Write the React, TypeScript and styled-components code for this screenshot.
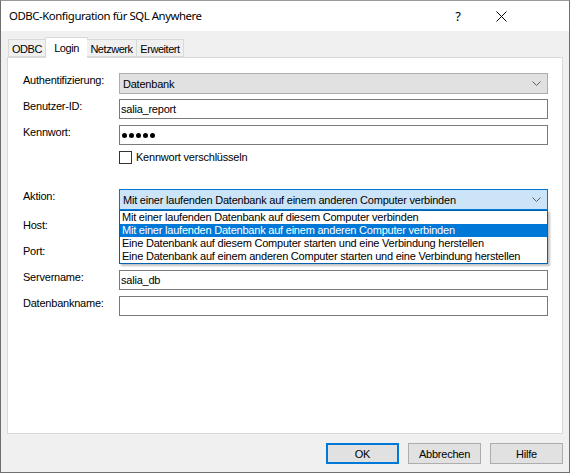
import React from 'react';
import styled, { createGlobalStyle } from 'styled-components';

const GlobalStyle = createGlobalStyle`
  html, body {
    margin: 0;
    padding: 0;
    background: #ffffff;
  }
  * {
    box-sizing: border-box;
  }
`;

const UI_FONT = `"Liberation Sans", Arial, sans-serif`;

// Outer dialog frame with the thin dark window border.
const Window = styled.div`
  width: 570px;
  height: 473px;
  display: flex;
  flex-direction: column;
  border: 1px solid #6f6f6f;
  border-top-color: #9a9a9a;
  background: #f0f0f0;
  font-family: ${UI_FONT};
  font-size: 11px;
  letter-spacing: -0.22px;
  color: #000;
`;

const TitleBar = styled.div`
  height: 30px;
  flex: none;
  display: flex;
  align-items: center;
  background: #ffffff;
  padding-left: 8px;
`;

const Title = styled.div`
  flex: 1;
  font-family: "Noto Sans", "Segoe UI", sans-serif;
  font-size: 11.4px;
  letter-spacing: -0.45px;
  padding-bottom: 1px;
`;

const TitleButton = styled.div<{ $w: number }>`
  width: ${(p) => p.$w}px;
  height: 30px;
  display: flex;
  align-items: center;
  justify-content: center;
  font-family: "Noto Sans", sans-serif;
  font-size: 13px;
`;

const Body = styled.div`
  flex: 1;
  display: flex;
  flex-direction: column;
  padding: 7px 6px 8px 6px;
`;

const TabStrip = styled.div`
  display: flex;
  align-items: flex-end;
  height: 19px;
  padding-left: 1px;
  position: relative;
  z-index: 1;
`;

const Tab = styled.div<{ $active?: boolean; $w: number }>`
  width: ${(p) => p.$w}px;
  height: ${(p) => (p.$active ? 21 : 18)}px;
  margin-bottom: ${(p) => (p.$active ? -1 : 0)}px;
  margin-left: ${(p) => (p.$active ? -1 : 0)}px;
  margin-right: ${(p) => (p.$active ? -1 : 0)}px;
  display: flex;
  align-items: center;
  justify-content: center;
  padding-top: ${(p) => (p.$active ? 0 : 2)}px;
  background: ${(p) => (p.$active ? '#ffffff' : '#f0f0f0')};
  border: 1px solid #d9d9d9;
  border-bottom: ${(p) => (p.$active ? 'none' : '1px solid #d9d9d9')};
  border-left: ${(p) => (p.$active ? '1px solid #d9d9d9' : 'none')};
  white-space: nowrap;
  letter-spacing: -0.45px;
  &:first-child {
    border-left: 1px solid #d9d9d9;
  }
`;

const Panel = styled.div`
  height: 377px;
  background: #ffffff;
  border: 1px solid #d9d9d9;
  padding: 15px 14px 0 15px;
  display: flex;
  flex-direction: column;
`;

const Row = styled.div<{ $mt?: number }>`
  display: flex;
  align-items: flex-start;
  margin-top: ${(p) => p.$mt ?? 6}px;
`;

const Label = styled.div`
  width: 96px;
  flex: none;
  line-height: 13px;
  padding-top: 1px;
`;

const Control = styled.div`
  flex: 1;
  position: relative;
`;

const TextBox = styled.div`
  height: 20px;
  border: 1px solid #7a7a7a;
  background: #ffffff;
  display: flex;
  align-items: center;
  padding-left: 1px;
  white-space: nowrap;
`;

// Masked password characters, drawn as small round bullets.
const Dots = styled.span`
  display: flex;
  gap: 2px;
  padding-left: 1px;
`;

const Dot = styled.span`
  width: 5px;
  height: 5px;
  border-radius: 50%;
  background: #000;
`;

const Combo = styled.div<{ $focused?: boolean }>`
  height: 21px;
  border: 1px solid ${(p) => (p.$focused ? '#0078d7' : '#adadad')};
  background: ${(p) => (p.$focused ? '#cce4f7' : '#e1e1e1')};
  display: flex;
  align-items: center;
  padding-left: 3px;
  padding-right: 6px;
  white-space: nowrap;
`;

const ComboText = styled.span`
  flex: 1;
`;

const DropList = styled.div`
  position: absolute;
  top: 21px;
  left: 0;
  right: 0;
  height: 54px;
  background: #ffffff;
  border: 1px solid #0063b1;
  box-shadow: 2px 2px 2px rgba(0, 0, 0, 0.25);
  z-index: 2;
`;

const DropItem = styled.div<{ $selected?: boolean }>`
  height: 13px;
  line-height: 13px;
  padding-left: 2px;
  white-space: nowrap;
  background: ${(p) => (p.$selected ? '#0078d7' : 'transparent')};
  color: ${(p) => (p.$selected ? '#ffffff' : '#000000')};
`;

const CheckRow = styled.label`
  display: flex;
  align-items: center;
  gap: 4px;
  line-height: 13px;
`;

const CheckBox = styled.span`
  width: 13px;
  height: 13px;
  border: 1px solid #333333;
  background: #ffffff;
  flex: none;
`;

const ButtonBar = styled.div`
  display: flex;
  justify-content: flex-end;
  gap: 9px;
  padding-top: 9px;
`;

const Button = styled.div<{ $default?: boolean }>`
  width: 73px;
  height: 21px;
  display: flex;
  align-items: center;
  justify-content: center;
  background: #e1e1e1;
  border: ${(p) => (p.$default ? '2px solid #0078d7' : '1px solid #adadad')};
`;

const Chevron = () => (
  <svg width="9" height="5" viewBox="0 0 9 5">
    <path d="M0.5 0.5 L4.5 4.5 L8.5 0.5" fill="none" stroke="#606060" strokeWidth="1" />
  </svg>
);

const CloseIcon = () => (
  <svg width="11" height="11" viewBox="0 0 11 11">
    <path d="M0.5 0.5 L10.5 10.5 M10.5 0.5 L0.5 10.5" stroke="#000" strokeWidth="1" />
  </svg>
);

const actions = [
  'Mit einer laufenden Datenbank auf diesem Computer verbinden',
  'Mit einer laufenden Datenbank auf einem anderen Computer verbinden',
  'Eine Datenbank auf diesem Computer starten und eine Verbindung herstellen',
  'Eine Datenbank auf einem anderen Computer starten und eine Verbindung herstellen',
];

const tabs = [
  { name: 'ODBC', w: 38 },
  { name: 'Login', w: 43 },
  { name: 'Netzwerk', w: 50 },
  { name: 'Erweitert', w: 47 },
];

export default function App() {
  return (
    <>
      <GlobalStyle />
      <Window>
        <TitleBar>
          <Title>ODBC-Konfiguration für SQL Anywhere</Title>
          <TitleButton $w={40}>?</TitleButton>
          <TitleButton $w={46}>
            <CloseIcon />
          </TitleButton>
          <div style={{ width: 45 }} />
        </TitleBar>
        <Body>
          <TabStrip>
            {tabs.map((t) => (
              <Tab key={t.name} $w={t.w} $active={t.name === 'Login'}>
                {t.name}
              </Tab>
            ))}
          </TabStrip>
          <Panel>
            <Row $mt={0}>
              <Label>Authentifizierung:</Label>
              <Control>
                <Combo>
                  <ComboText>Datenbank</ComboText>
                  <Chevron />
                </Combo>
              </Control>
            </Row>
            <Row $mt={5}>
              <Label>Benutzer-ID:</Label>
              <Control>
                <TextBox>salia_report</TextBox>
              </Control>
            </Row>
            <Row>
              <Label>Kennwort:</Label>
              <Control>
                <TextBox>
                  <Dots>
                    {[0, 1, 2, 3, 4].map((i) => (
                      <Dot key={i} />
                    ))}
                  </Dots>
                </TextBox>
              </Control>
            </Row>
            <Row>
              <Label />
              <CheckRow>
                <CheckBox />
                Kennwort verschlüsseln
              </CheckRow>
            </Row>
            <Row $mt={25}>
              <Label>Aktion:</Label>
              <Control>
                <Combo $focused>
                  <ComboText>{actions[1]}</ComboText>
                  <Chevron />
                </Combo>
                <DropList>
                  {actions.map((a, i) => (
                    <DropItem key={a} $selected={i === 1}>
                      {a}
                    </DropItem>
                  ))}
                </DropList>
              </Control>
            </Row>
            <Row $mt={8}>
              <Label>Host:</Label>
              <Control>
                <TextBox />
              </Control>
            </Row>
            <Row>
              <Label>Port:</Label>
              <Control>
                <TextBox />
              </Control>
            </Row>
            <Row>
              <Label>Servername:</Label>
              <Control>
                <TextBox>salia_db</TextBox>
              </Control>
            </Row>
            <Row>
              <Label>Datenbankname:</Label>
              <Control>
                <TextBox />
              </Control>
            </Row>
          </Panel>
          <ButtonBar>
            <Button $default>OK</Button>
            <Button>Abbrechen</Button>
            <Button>Hilfe</Button>
          </ButtonBar>
        </Body>
      </Window>
    </>
  );
}
